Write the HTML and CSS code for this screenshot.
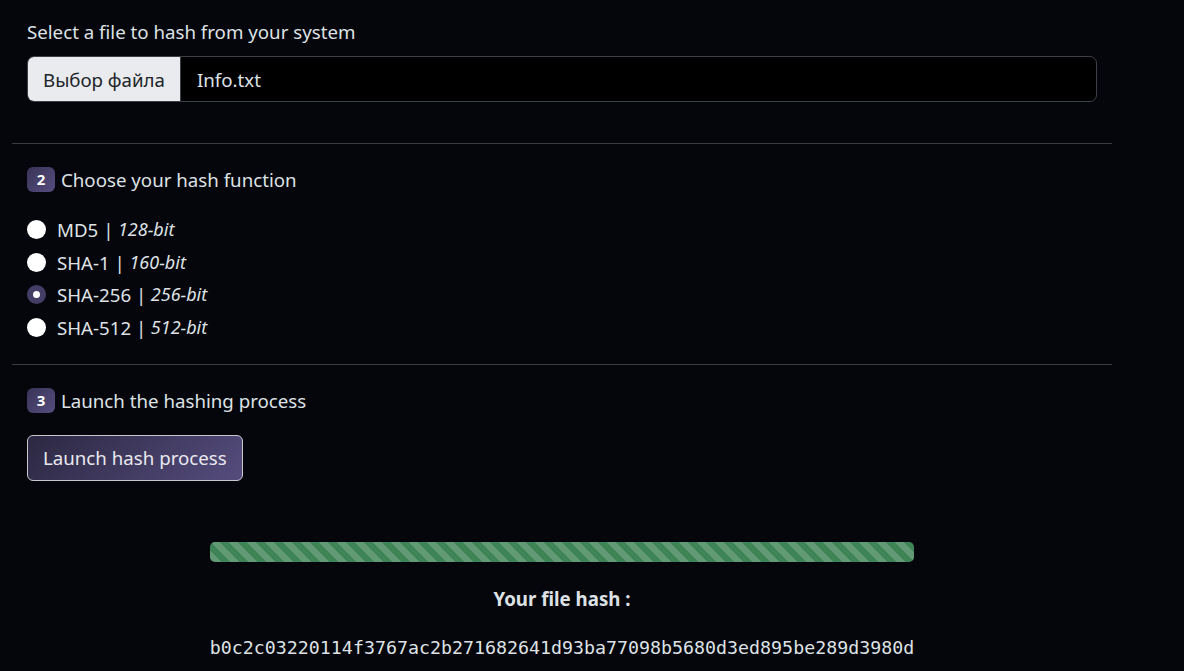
FILE: index.html
```html
<!DOCTYPE html>
<html lang="en">
<head>
<meta charset="utf-8">
<title>File hasher</title>
<link rel="stylesheet" href="styles.css">
</head>
<body>
<main class="page">
  <section class="step step-file">
    <label class="step-label" for="file">Select a file to hash from your system</label>
    <div class="file-input">
      <span class="file-btn">Выбор файла</span>
      <span class="file-name">Info.txt</span>
    </div>
  </section>

  <section class="step step-algo">
    <h2 class="step-title"><span class="badge">2</span>Choose your hash function</h2>
    <div class="radios">
      <label class="radio"><span class="radio-dot"></span>MD5 | <em>128-bit</em></label>
      <label class="radio"><span class="radio-dot"></span>SHA-1 | <em>160-bit</em></label>
      <label class="radio"><span class="radio-dot checked"></span>SHA-256 | <em>256-bit</em></label>
      <label class="radio"><span class="radio-dot"></span>SHA-512 | <em>512-bit</em></label>
    </div>
  </section>

  <section class="step step-run">
    <h2 class="step-title"><span class="badge">3</span>Launch the hashing process</h2>
    <button class="launch-btn" type="button">Launch hash process</button>
    <div class="result">
      <div class="progress"><div class="progress-bar"></div></div>
      <p class="result-title">Your file hash :</p>
      <p class="hash">b0c2c03220114f3767ac2b271682641d93ba77098b5680d3ed895be289d3980d</p>
    </div>
  </section>
</main>
</body>
</html>
```

FILE: styles.css
```css
html, body {
  margin: 0;
  padding: 0;
  background: #05060b;
  color: #dee2e6;
  font-family: "Noto Sans", "Open Sans", sans-serif;
  font-size: 18.7px;
  line-height: 27px;
}

.page {
  width: 1100px;
  margin-left: 12px;
}

.step {
  padding: 0 15px;
}

.step + .step {
  border-top: 1px solid #3a3b41;
}

.step-file {
  padding-top: 18px;
  padding-bottom: 41px;
}

.step-label {
  display: block;
  margin-bottom: 11px;
}

.file-input {
  display: flex;
  height: 46px;
  box-sizing: border-box;
  border: 1px solid #3c3f46;
  border-radius: 7px;
  background: #000;
  overflow: hidden;
}

.file-btn {
  display: flex;
  align-items: center;
  padding: 0 15px;
  background: #e9ebef;
  color: #212529;
  border-right: 1px solid #3c3f46;
}

.file-name {
  display: flex;
  align-items: center;
  padding-left: 16px;
  color: #dee2e6;
}

.step-algo {
  padding-top: 22px;
  padding-bottom: 23px;
}

.step-title {
  display: flex;
  align-items: center;
  margin: 0;
  font-size: 18.7px;
  font-weight: 400;
  height: 27px;
}

.badge {
  display: inline-flex;
  align-items: center;
  justify-content: center;
  width: 28px;
  height: 25px;
  margin-right: 6px;
  border-radius: 6px;
  background: linear-gradient(135deg, #3a3457, #554d7e);
  color: #fff;
  font-size: 15px;
  font-weight: 700;
}

.radios {
  display: flex;
  flex-direction: column;
  gap: 5.5px;
  margin-top: 23px;
}

.radio {
  display: flex;
  align-items: center;
  height: 27px;
}

.radio em {
  margin-left: 0.25em;
  font-style: italic;
  font-size: 18px;
}

.radio-dot {
  width: 19px;
  height: 19px;
  border-radius: 50%;
  background: #fff;
  margin-right: 11px;
  box-sizing: border-box;
  flex: none;
}

.radio-dot.checked {
  background: #fff;
  border: 6px solid #443d66;
}

.step-run {
  padding-top: 22px;
  padding-bottom: 16px;
}

.launch-btn {
  display: block;
  margin-top: 21px;
  height: 46px;
  padding: 0 15px;
  border: 1px solid #c9c8d2;
  border-radius: 6px;
  background: linear-gradient(135deg, #2c2842, #554c7d);
  color: #e9e8ef;
  font-family: inherit;
  font-size: 18.7px;
}

.result {
  display: flex;
  flex-direction: column;
  align-items: center;
  margin-top: 61px;
  margin-left: -15px;
  width: 1100px;
}

.progress {
  width: 704px;
  height: 20px;
  border-radius: 5px;
  overflow: hidden;
  background: #1b1d22;
}

.progress-bar {
  width: 100%;
  height: 100%;
  background-color: #3f8457;
  background-image: linear-gradient(45deg,
    rgba(255,255,255,.18) 25%, transparent 25%,
    transparent 50%, rgba(255,255,255,.18) 50%,
    rgba(255,255,255,.18) 75%, transparent 75%, transparent);
  background-size: 18px 18px;
}

.result-title {
  margin: 23px 0 0;
  font-weight: 700;
}

.hash {
  margin: 22px 0 0;
  font-family: "DejaVu Sans Mono", "Liberation Mono", monospace;
  font-size: 18.3px;
  letter-spacing: 0;
}
```
